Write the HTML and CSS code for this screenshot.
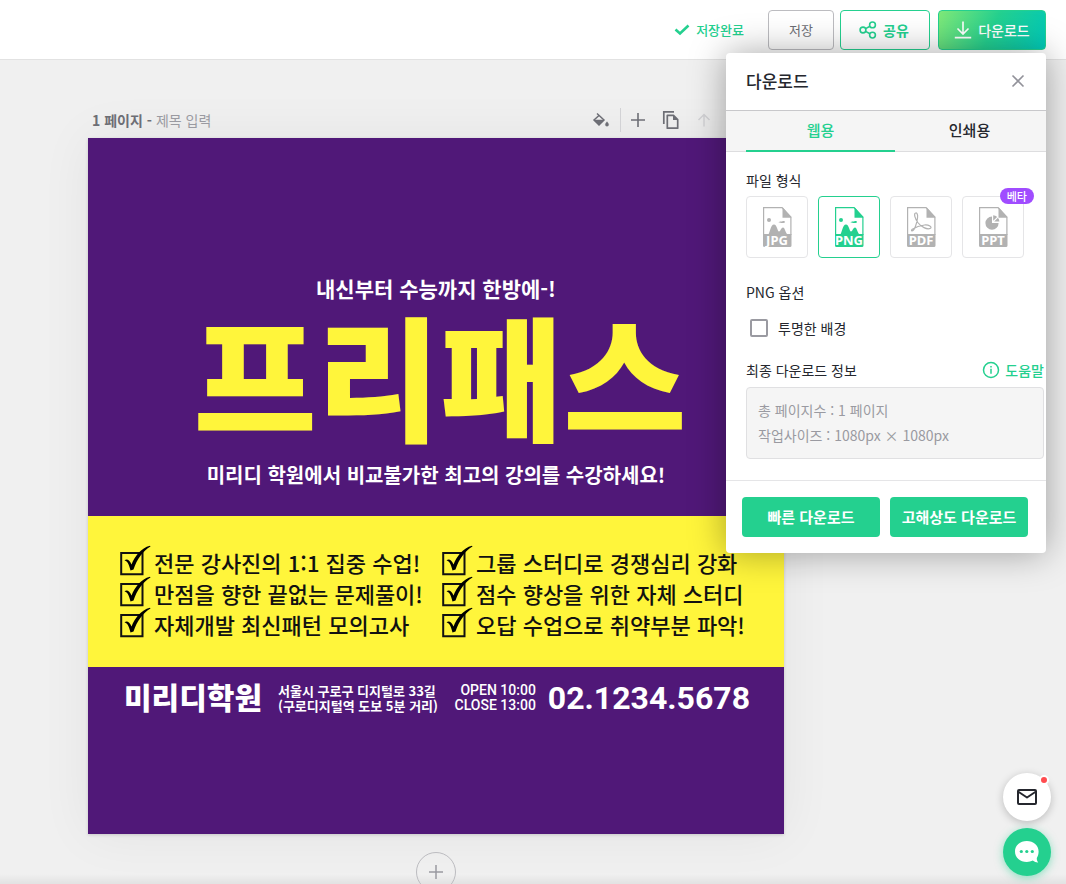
FILE: index.html
```html
<!DOCTYPE html>
<html lang="ko">
<head>
<meta charset="utf-8">
<meta name="viewport" content="width=device-width, initial-scale=1">
<title>다운로드</title>
<link rel="stylesheet" href="styles.css">
</head>
<body>
<header class="topbar">
  <p class="saved">
    <svg class="saved-icon" width="16" height="12" viewBox="0 0 16 12"><path d="M1.500 5.500 6 9.500l8.500-8" fill="none" stroke="currentColor" stroke-width="2.600"/></svg>
    저장완료
  </p>
  <button class="btn btn-save" type="button">저장</button>
  <button class="btn btn-share" type="button">
    <svg width="18" height="18" viewBox="0 0 18 18" fill="none" stroke="currentColor" stroke-width="1.600"><circle cx="4" cy="9" r="2.900"/><circle cx="13.500" cy="3.900" r="2.900"/><circle cx="13.500" cy="14.100" r="2.900"/><path d="m6.600 7.600 4.400-2.400M6.600 10.400l4.400 2.400"/></svg>
    공유
  </button>
  <div class="download">
    <button class="btn btn-download" type="button">
      <svg width="18" height="18" viewBox="0 0 18 18" fill="none" stroke="currentColor" stroke-width="1.600"><path d="M9 .5v12.500M3.500 7.500 9 13l5.500-5.500M.8 16.600h16.400"/></svg>
      다운로드
    </button>
    <section class="panel" aria-label="다운로드">
      <div class="panel-head">
        <h2>다운로드</h2>
        <button class="close" type="button" aria-label="닫기"><svg width="14" height="14" viewBox="0 0 14 14"><path d="m1.500 1.500 11 11m0-11-11 11" stroke="currentColor" stroke-width="1.600"/></svg></button>
      </div>
      <div class="tabs">
        <button class="tab tab-active" type="button">웹용</button>
        <button class="tab" type="button">인쇄용</button>
      </div>
      <div class="panel-body">
        <h3>파일 형식</h3>
        <div class="formats">
          <label class="format">
            <input type="radio" name="format" aria-label="JPG">
            <svg width="30" height="40" viewBox="0 0 30 40"><path d="M1.600 28V.6H20l8.900 9.400v18" fill="none" stroke="currentColor" stroke-width="1.200"/><path d="M20.500 0v10.800h9z" fill="currentColor"/><circle cx="7" cy="13" r="2" fill="currentColor"/><path d="M16.500 15.500c1-1.500 3-.8 4-1.300 1-.6 2.500-.2 2.500.8 0 1.500-4.500 1-6.500.5zM6 28c2-2 2.500-10.500 6-10.500 3 0 3.500 7 5 7s2-4 4-4 2 5 5 7.500z" fill="currentColor"/><path d="M1 27h28.500v11.500a1.500 1.500 0 0 1-1.500 1.500H2.500a1.500 1.500 0 0 1-1.500-1.500z" fill="currentColor"/><text class="ext" x="15" y="38">JPG</text></svg>
          </label>
          <label class="format">
            <input type="radio" name="format" aria-label="PNG" checked>
            <svg width="30" height="40" viewBox="0 0 30 40"><path d="M1.600 28V.6H20l8.900 9.400v18" fill="none" stroke="currentColor" stroke-width="1.200"/><path d="M20.500 0v10.800h9z" fill="currentColor"/><circle cx="7" cy="13" r="2" fill="currentColor"/><path d="M16.500 15.500c1-1.500 3-.8 4-1.300 1-.6 2.500-.2 2.500.8 0 1.500-4.500 1-6.500.5zM6 28c2-2 2.500-10.500 6-10.500 3 0 3.500 7 5 7s2-4 4-4 2 5 5 7.500z" fill="currentColor"/><path d="M1 27h28.500v11.500a1.500 1.500 0 0 1-1.500 1.500H2.500a1.500 1.500 0 0 1-1.500-1.500z" fill="currentColor"/><text class="ext" x="15" y="38">PNG</text></svg>
          </label>
          <label class="format">
            <input type="radio" name="format" aria-label="PDF">
            <svg width="30" height="40" viewBox="0 0 30 40"><path d="M1.600 28V.6H20l8.900 9.400v18" fill="none" stroke="currentColor" stroke-width="1.200"/><path d="M20.500 0v10.800h9z" fill="currentColor"/><path d="M9.600 6c-2 .6-.8 5 2.200 9.500 3.200 4.300 9.200 7.500 12.700 5.800 1.800-1.300-1.500-3.700-6-3.300-4.500.5-9.500 2.500-12.200 4.300-2 1.700.2 2.500 1.700.2 2-3.500 4-11 3.600-14.200-.3-1.800-1-2.700-2-2.300z" fill="none" stroke="currentColor" stroke-width="1.200"/><path d="M1 27h28.500v11.500a1.500 1.500 0 0 1-1.500 1.500H2.500a1.500 1.500 0 0 1-1.500-1.500z" fill="currentColor"/><text class="ext" x="15" y="38">PDF</text></svg>
          </label>
          <label class="format">
            <input type="radio" name="format" aria-label="PPT">
            <svg width="30" height="40" viewBox="0 0 30 40"><path d="M1.600 28V.6H20l8.900 9.400v18" fill="none" stroke="currentColor" stroke-width="1.200"/><path d="M20.500 0v10.800h9z" fill="currentColor"/><path d="M14 9.500a6.600 6.600 0 1 0 6.600 6.600H14z" fill="currentColor"/><path d="M15.200 13.800V8.300c1.500.1 2.800.6 3.900 1.600zM16.200 14.500l3.700-3.800c.9 1 1.400 2.300 1.500 3.800z" fill="currentColor"/><path d="M1 27h28.500v11.500a1.500 1.500 0 0 1-1.500 1.500H2.500a1.500 1.500 0 0 1-1.500-1.500z" fill="currentColor"/><text class="ext" x="15" y="38">PPT</text></svg>
            <span class="beta">베타</span>
          </label>
        </div>
        <h3>PNG 옵션</h3>
        <label class="option"><input class="checkbox" type="checkbox"> 투명한 배경</label>
        <div class="info-head">
          <h3>최종 다운로드 정보</h3>
          <a class="help" href="#help">
            <svg width="18" height="18" viewBox="0 0 18 18"><circle cx="9" cy="9" r="7.500" fill="none" stroke="currentColor" stroke-width="1.500"/><path d="M9 7.800v5M9 5v1.500" stroke="currentColor" stroke-width="1.500"/></svg>
            도움말
          </a>
        </div>
        <div class="info">
          <p>총 페이지수 : 1 페이지</p>
          <p>작업사이즈 : 1080px × 1080px</p>
        </div>
      </div>
      <div class="panel-foot">
        <button class="cta" type="button">빠른 다운로드</button>
        <button class="cta" type="button">고해상도 다운로드</button>
      </div>
    </section>
  </div>
</header>

<main class="workspace">
  <div class="page">
    <div class="page-bar">
      <label class="page-name">1 페이지 - <input class="page-title" type="text" placeholder="제목 입력"></label>
      <div class="tools">
        <button class="tool tool-fill" type="button" aria-label="배경색"><svg width="18" height="18" viewBox="0 0 18 18"><path d="M5 2.500 12 9l-5 5-5-5 5-4.500" fill="none" stroke="currentColor" stroke-width="1.500"/><path d="M2 9h10l-5 5zM15 10.800s-1.600 1.800-1.600 2.800a1.600 1.600 0 0 0 3.200 0c0-1-1.600-2.800-1.600-2.800z" fill="currentColor" stroke="currentColor" stroke-width=".5"/></svg></button>
        <button class="tool" type="button" aria-label="페이지 추가"><svg width="14" height="14" viewBox="0 0 14 14"><path d="M7 0v14M0 7h14" stroke="currentColor" stroke-width="1.600"/></svg></button>
        <button class="tool" type="button" aria-label="페이지 복제"><svg width="18" height="20" viewBox="0 0 18 20"><path d="M1.800 14V1.800H12" fill="none" stroke="currentColor" stroke-width="1.700"/><path d="M5.300 5.300h6.200l4.200 4.200v8.700H5.300z" fill="none" stroke="currentColor" stroke-width="1.700" stroke-linejoin="round"/><path d="M11 5v5h5z" fill="currentColor"/></svg></button>
        <button class="tool" type="button" aria-label="위로 이동" disabled><svg width="14" height="14" viewBox="0 0 14 14"><path d="M7 13.500V2M1.500 7 7 1.500 12.500 7" fill="none" stroke="currentColor" stroke-width="1.500"/></svg></button>
      </div>
    </div>
    <article class="poster">
      <div class="poster-top">
        <p class="lead">내신부터 수능까지 한방에-!</p>
        <h1>프리패스</h1>
        <p class="sub">미리디 학원에서 비교불가한 최고의 강의를 수강하세요!</p>
      </div>
      <div class="band">
        <ul>
          <li><svg class="tick" viewBox="0 2 32 31"><path d="M1.200 8h21.300v21.300H1.200z" fill="none" stroke="#111" stroke-width="2"/><path d="M4.500 15.500c2-2 5-1 7 4C15 11 21 3 30 .8l.5.7C23 6 17 14 13.500 24.500l-3 1C9 19 7 15.500 4.500 15.500z"/></svg>전문 강사진의 1:1 집중 수업!</li>
          <li><svg class="tick" viewBox="0 2 32 31"><path d="M1.200 8h21.300v21.300H1.200z" fill="none" stroke="#111" stroke-width="2"/><path d="M4.500 15.500c2-2 5-1 7 4C15 11 21 3 30 .8l.5.7C23 6 17 14 13.500 24.500l-3 1C9 19 7 15.500 4.500 15.500z"/></svg>만점을 향한 끝없는 문제풀이!</li>
          <li><svg class="tick" viewBox="0 2 32 31"><path d="M1.200 8h21.300v21.300H1.200z" fill="none" stroke="#111" stroke-width="2"/><path d="M4.500 15.500c2-2 5-1 7 4C15 11 21 3 30 .8l.5.7C23 6 17 14 13.500 24.500l-3 1C9 19 7 15.500 4.500 15.500z"/></svg>자체개발 최신패턴 모의고사</li>
        </ul>
        <ul>
          <li><svg class="tick" viewBox="0 2 32 31"><path d="M1.200 8h21.300v21.300H1.200z" fill="none" stroke="#111" stroke-width="2"/><path d="M4.500 15.500c2-2 5-1 7 4C15 11 21 3 30 .8l.5.7C23 6 17 14 13.500 24.500l-3 1C9 19 7 15.500 4.500 15.500z"/></svg>그룹 스터디로 경쟁심리 강화</li>
          <li><svg class="tick" viewBox="0 2 32 31"><path d="M1.200 8h21.300v21.300H1.200z" fill="none" stroke="#111" stroke-width="2"/><path d="M4.500 15.500c2-2 5-1 7 4C15 11 21 3 30 .8l.5.7C23 6 17 14 13.500 24.500l-3 1C9 19 7 15.500 4.500 15.500z"/></svg>점수 향상을 위한 자체 스터디</li>
          <li><svg class="tick" viewBox="0 2 32 31"><path d="M1.200 8h21.300v21.300H1.200z" fill="none" stroke="#111" stroke-width="2"/><path d="M4.500 15.500c2-2 5-1 7 4C15 11 21 3 30 .8l.5.7C23 6 17 14 13.500 24.500l-3 1C9 19 7 15.500 4.500 15.500z"/></svg>오답 수업으로 취약부분 파악!</li>
        </ul>
      </div>
      <div class="contact">
        <strong class="brand">미리디학원</strong>
        <p class="address">서울시 구로구 디지털로 33길<br>(구로디지털역 도보 5분 거리)</p>
        <p class="hours">OPEN 10:00<br>CLOSE 13:00</p>
        <strong class="phone">02.1234.5678</strong>
      </div>
    </article>
    <button class="add-page" type="button" aria-label="페이지 추가"><svg width="14" height="14" viewBox="0 0 14 14"><path d="M7 0v14M0 7h14" stroke="currentColor" stroke-width="1.500"/></svg></button>
  </div>
</main>

<aside class="floating">
  <button class="round round-mail" type="button" aria-label="메일">
    <svg width="22" height="18" viewBox="0 0 22 18" fill="none" stroke="currentColor" stroke-width="2" stroke-linejoin="round"><rect x="2" y="2" width="18" height="14" rx="1"/><path d="m2 3.500 9 6 9-6"/></svg>
    <span class="dot"></span>
  </button>
  <button class="round round-chat" type="button" aria-label="채팅">
    <svg width="26" height="24" viewBox="0 0 26 24"><path d="M12.800 1C6 1 1 5.500 1 11.500S6 22 12.800 22c2.200 0 4.300-.5 6-1.400 1.700 1.400 3.500 2 5.400 1.900-1-1.300-1.500-3-1.400-4.600 1.200-1.800 1.800-4 1.800-6.400C24.600 5.500 19.500 1 12.800 1z" fill="#fff"/><g fill="#24d08f"><circle cx="7.300" cy="11.500" r="1.600"/><circle cx="12.800" cy="11.500" r="1.600"/><circle cx="18.300" cy="11.500" r="1.600"/></g></svg>
  </button>
</aside>
</body>
</html>
```

FILE: styles.css
```css
:root {
  --green: #24d08f;
  --ink: #25272e;
  --gray: #6d6e75;
  --purple: #501878;
  --yellow: #fff53b;
}

* { box-sizing: border-box; }

body, h1, h2, h3, p, ul { margin: 0; padding: 0; }

body {
  display: flex;
  flex-direction: column;
  height: 100vh;
  overflow: hidden;
  background: #f0f0f0;
  color: var(--ink);
  font: 14px/20px "Noto Sans CJK KR", "Noto Sans", sans-serif;
}

button {
  padding: 0;
  border: 0;
  background: none;
  color: inherit;
  font: inherit;
  cursor: pointer;
}

svg { display: block; flex: none; }

/* Top bar */
.topbar {
  position: relative;
  z-index: 2;
  display: flex;
  flex: none;
  align-items: center;
  justify-content: flex-end;
  height: 60px;
  padding: 0 20px;
  border-bottom: 1px solid #e2e2e2;
  background: #fff;
}

.saved {
  display: flex;
  align-items: center;
  gap: 6px;
  margin-right: 24px;
  color: var(--green);
  font-size: 13px;
  font-weight: 500;
}

.btn {
  display: flex;
  align-items: center;
  justify-content: center;
  gap: 6px;
  height: 40px;
  border: 1px solid var(--green);
  border-radius: 4px;
}

.btn-save {
  width: 66px;
  margin-right: 6px;
  border-color: #bcbcc0;
  color: var(--gray);
  font-size: 13px;
}

.btn-share {
  width: 90px;
  margin-right: 8px;
  padding-right: 2px;
  color: var(--green);
  font-weight: 700;
}

.btn-download {
  width: 108px;
  background: linear-gradient(115deg, #80e878 0%, #24d08f 50%, #00c8b8 100%);
  color: #fff;
  font-weight: 500;
}

.download { position: relative; }

/* Download panel */
.panel {
  position: absolute;
  top: 43px;
  right: 0;
  width: 320px;
  border-radius: 4px;
  background: #fff;
  box-shadow: 0 0 36px rgba(0, 0, 0, 0.35);
}

.panel-head {
  display: flex;
  align-items: center;
  justify-content: space-between;
  height: 58px;
  padding: 0 20px;
  border-bottom: 1px solid #c8c8cb;
}

.panel-head h2 { font-size: 17px; font-weight: 500; line-height: 24px; }

.close { width: 16px; color: #92929a; }
.close svg { margin: auto; }

.tabs {
  display: flex;
  height: 41px;
  padding: 0 2px 0 20px;
  background: #f5f5f5;
  box-shadow: inset 0 -1px #dddddf;
}

.tab {
  flex: 1;
  border-bottom: 2px solid transparent;
  font-size: 15px;
  font-weight: 500;
}

.tab-active { border-bottom-color: var(--green); color: var(--green); }

.panel-body { padding: 18px 2px 21px 20px; }
.panel-body h3 { font-size: 14px; font-weight: 400; }

.formats { display: flex; gap: 10px; margin: 6px 0 24px; }

.format {
  position: relative;
  display: grid;
  place-items: center;
  width: 62px;
  height: 62px;
  border: 1px solid #e5e5e7;
  border-radius: 4px;
  color: #b2b2b2;
}

.format:has(input:checked) { border-color: var(--green); color: var(--green); }

.format input { position: absolute; opacity: 0; }

.ext {
  fill: #fff;
  font: 700 13px "Noto Sans", sans-serif;
  text-anchor: middle;
}

.beta {
  position: absolute;
  top: -9px;
  right: -11px;
  padding: 0 7px;
  border-radius: 8px;
  background: #a04cff;
  color: #fff;
  font-size: 11px;
  font-weight: 500;
  line-height: 16px;
}

.option {
  display: flex;
  align-items: center;
  gap: 10px;
  margin: 16px 0 22px;
  padding-left: 4px;
}

.checkbox {
  appearance: none;
  width: 18px;
  height: 18px;
  margin: 0;
  border: 2px solid #9a9aa1;
  border-radius: 2px;
}

.info-head { display: flex; justify-content: space-between; margin-bottom: 7px; }

.help {
  display: flex;
  align-items: center;
  gap: 5px;
  color: var(--green);
  font-weight: 500;
  text-decoration: none;
}

.info {
  padding: 10px 11px;
  border: 1px solid #e0e0e2;
  border-radius: 4px;
  background: #f5f5f5;
  color: #9a9aa1;
  line-height: 25px;
}

.panel-foot {
  display: flex;
  gap: 10px;
  padding: 16px 18px 16px 16px;
  border-top: 1px solid #e5e5e7;
}

.cta {
  flex: 1;
  height: 40px;
  border-radius: 4px;
  background: var(--green);
  color: #fff;
  font-size: 15px;
  font-weight: 700;
}

/* Workspace */
.workspace {
  flex: 1;
  min-height: 0;
  padding: 0 88px;
  overflow: hidden;
  background: linear-gradient(transparent calc(100% - 10px), rgba(0, 0, 0, 0.06));
}

.page { max-width: 696px; }

.page-bar {
  display: flex;
  justify-content: space-between;
  padding: 48px 73px 6px 4px;
}

.page-name {
  display: flex;
  align-items: center;
  gap: 4px;
  color: var(--gray);
  font-weight: 700;
}

.page-title {
  width: 120px;
  padding: 0;
  border: 0;
  background: none;
  color: var(--gray);
  font: inherit;
  font-weight: 400;
}

.page-title::placeholder { color: #9a9aa1; }

.tools { display: flex; align-items: center; gap: 17px; color: var(--gray); }
.tool { display: grid; height: 24px; place-items: center; }
.tool:disabled { color: #d2d2d5; }
.tool-fill { padding-right: 10px; border-right: 1px solid #d2d2d5; }
.tools .tool-fill { margin-right: -7px; }

.poster {
  background: var(--purple);
  box-shadow: 0 1px 3px rgba(0, 0, 0, 0.15), 0 0 50px rgba(0, 0, 0, 0.06);
  color: #fff;
}

.poster-top {
  padding: 135px 0 26px;
  text-align: center;
  white-space: nowrap;
}

.lead { font-size: 21px; font-weight: 700; line-height: 30px; }

.poster h1 {
  padding-left: 8px;
  margin: 0 0 17px;
  color: var(--yellow);
  font-size: 134px;
  font-weight: 900;
  line-height: 140px;
}

.sub { font-size: 20px; font-weight: 700; line-height: 30px; }

.band {
  display: grid;
  grid-template-columns: 322px 1fr;
  padding: 31px 32px 27px;
  background: var(--yellow);
  color: #111;
  font-size: 22px;
  font-weight: 500;
  line-height: 31px;
  white-space: nowrap;
}

.band ul { list-style: none; }
.band li { display: flex; gap: 2px; }

.tick { width: 32px; height: 31px; overflow: visible; }

.contact {
  display: flex;
  align-items: center;
  padding: 14px 34px 119px 36px;
  white-space: nowrap;
}

.brand {
  margin: 0 16px 4px 0;
  font-size: 30px;
  font-weight: 900;
  line-height: 30px;
}

.address, .hours { font-weight: 500; line-height: 15px; }

.address { font-size: 13px; font-weight: 700; }

.hours {
  margin: 0 12px 0 auto;
  font-family: Roboto, sans-serif;
  text-align: right;
}

.phone { font: 700 32px/34px Roboto, sans-serif; }

.add-page {
  display: grid;
  width: 40px;
  height: 40px;
  margin: 18px auto 0;
  place-items: center;
  border: 1px solid #bcbcc0;
  border-radius: 50%;
  color: #9a9aa1;
}

/* Floating shortcuts */
.floating {
  position: fixed;
  right: 15px;
  bottom: 8px;
  z-index: 3;
  display: grid;
  gap: 7px;
}

.round {
  position: relative;
  display: grid;
  width: 48px;
  height: 48px;
  place-items: center;
  border-radius: 50%;
}

.round-mail { background: #fff; box-shadow: 0 2px 8px rgba(0, 0, 0, 0.22); }
.round-chat { background: var(--green); box-shadow: 0 2px 8px rgba(36, 208, 143, 0.5); }

.dot {
  position: absolute;
  top: 2px;
  right: 2px;
  width: 10px;
  height: 10px;
  border: 2px solid #fff;
  border-radius: 50%;
  background: #ff4b4f;
}
```
